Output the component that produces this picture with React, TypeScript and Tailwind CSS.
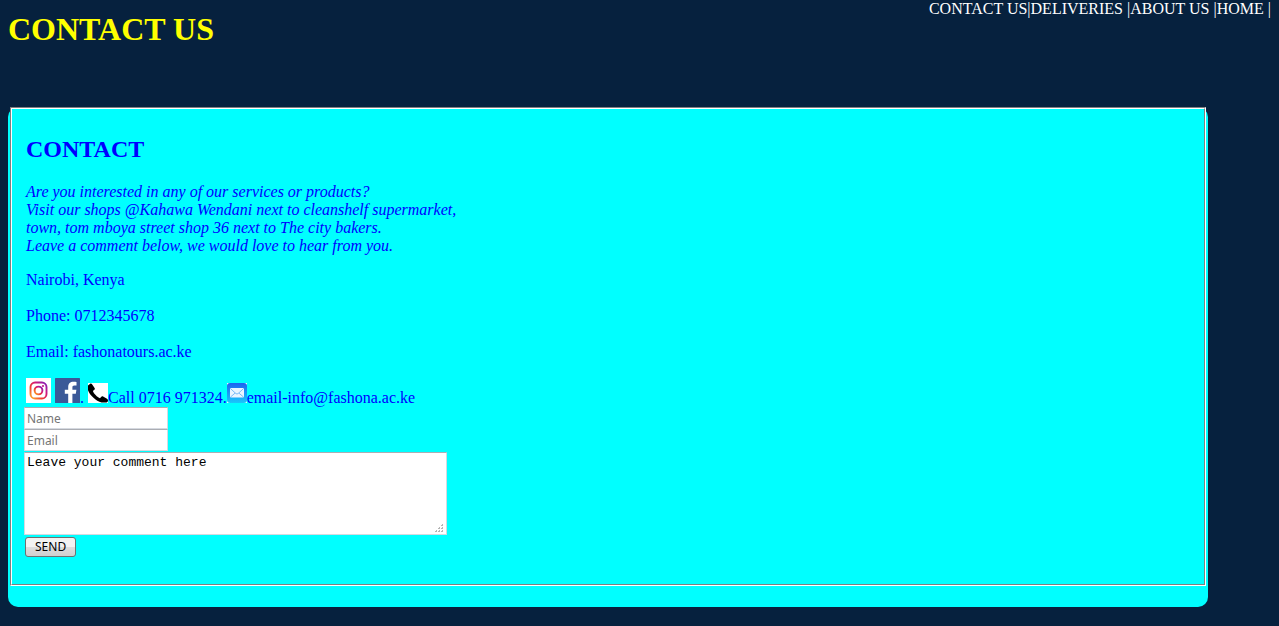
import type { ReactNode } from "react";

const links = ["CONTACT US|", "DELIVERIES |", "ABOUT US |", "HOME |"];

function InstagramIcon() {
  return (
    <svg className="inline-block h-[25px] w-[25px] align-baseline" viewBox="0 0 25 25" role="img" aria-label="Instagram">
      <defs>
        <linearGradient id="ig" x1="0" y1="1" x2="1" y2="0">
          <stop offset="0" stopColor="#fdb52a" />
          <stop offset="0.35" stopColor="#f1402f" />
          <stop offset="0.65" stopColor="#d2187a" />
          <stop offset="1" stopColor="#7d20c0" />
        </linearGradient>
      </defs>
      <rect width="25" height="25" fill="#fff" />
      <g fill="none" stroke="url(#ig)" strokeWidth="1.9">
        <rect x="4.5" y="4.5" width="16" height="16" rx="4.6" />
        <circle cx="12.5" cy="12.5" r="3.9" />
      </g>
      <circle cx="17" cy="8" r="1.1" fill="#c01c86" />
    </svg>
  );
}

function FacebookIcon() {
  return (
    <svg className="inline-block h-[25px] w-[25px] align-baseline" viewBox="0 0 25 25" role="img" aria-label="Facebook">
      <rect width="25" height="25" rx="0.6" fill="#3b5998" />
      <path
        d="M13.200 25v-9.300H9.800v-3.900h3.400V8.900c0-3.300 2.100-5.200 5.200-5.200 1.500 0 2.700.1 3.100.2v3.500h-2.100c-1.700 0-2 .8-2 2v2.400h4l-.6 3.900h-3.400V25z"
        fill="#fff"
      />
    </svg>
  );
}

function PhoneIcon() {
  return (
    <svg className="inline-block h-5 w-5 align-baseline" viewBox="0 0 20 20" role="img" aria-label="Phone">
      <rect width="20" height="20" fill="#fff" />
      <path
        d="M0 2.600L2.200.8C3 .4 3.700.7 4.200 1.500L6.600 5C7 5.700 6.900 6.300 6.300 6.800L4.900 8C5.300 10 9.500 14.600 12 15.200L13.300 13.700C13.800 13.100 14.400 13 15.100 13.400L19 15.800C19.700 16.300 20 16.800 20 17.500V18.200L18.600 19.600H13.600C8 17.800 1.500 12 0 7.200z"
        fill="#000"
      />
    </svg>
  );
}

function MailIcon() {
  return (
    <svg className="inline-block h-5 w-5 align-baseline" viewBox="0 0 20 20" role="img" aria-label="Mail">
      <defs>
        <linearGradient id="mail" x1="0" y1="0" x2="0" y2="1">
          <stop offset="0" stopColor="#1d62f0" />
          <stop offset="1" stopColor="#19c8fb" />
        </linearGradient>
      </defs>
      <rect width="20" height="20" fill="#fff" />
      <rect width="20" height="20" rx="3" fill="url(#mail)" />
      <rect x="3" y="5" width="14" height="9.500" rx="1.200" fill="#e9f4ff" />
      <path
        d="M3.500 5.600l5.300 4.900q1.200 1 2.400 0l5.300-4.900M3.500 14l4.700-4M16.500 14l-4.700-4"
        fill="none"
        stroke="#6fb4f5"
        strokeWidth="0.9"
      />
    </svg>
  );
}

function GripIcon() {
  return (
    <svg
      className="pointer-events-none absolute right-1 bottom-[3px] h-2 w-2"
      viewBox="0 0 8 8"
      fill="#b4b4b4"
      aria-hidden="true"
      shapeRendering="crispEdges"
    >
      <path d="M7 0h1v2H6V1h1zM4 3h1v2H3V4h1zM7 3h1v2H6V4h1zM1 6h1v2H0V7h1zM4 6h1v2H3V7h1zM7 6h1v2H6V7h1z" />
    </svg>
  );
}

function Groove({ children }: { children: ReactNode }) {
  return (
    <div className="mx-0.5 border border-t-[#808080] border-r-white border-b-white border-l-[#808080]">
      <div className="border border-t-white border-r-[#808080] border-b-[#808080] border-l-white">{children}</div>
    </div>
  );
}

const field =
  "block h-[22px] w-36 rounded-[1px] border border-[#d5d9e0] border-t-[#abadb3] bg-white px-0.5 font-['Noto_Sans',sans-serif] text-xs text-black outline-none placeholder:text-[#757575]";

export default function App() {
  return (
    <div className="min-h-screen bg-[#06213e] px-2 pb-[19px] font-['Liberation_Serif',serif] text-base leading-[18px]">
      <header className="flex items-start justify-between pb-[60px]">
        <h1 className="pt-[11px] text-[32px] leading-9 font-bold text-[#ffff00]">CONTACT US</h1>
        <nav className="flex text-white">
          {links.map((label) => (
            <a key={label} href="#">
              {label}
            </a>
          ))}
        </nav>
      </header>

      <main className="max-w-[1200px] rounded-[10px] bg-[#00ffff] pb-[21px] text-[#0000ff]">
        <Groove>
          <div className="px-3 pt-[26px] pb-[27px]">
            <section className="px-0.5">
              <h2 className="text-2xl leading-7 font-bold">CONTACT</h2>
              <p className="mt-5 italic">
                Are you interested in any of our services or products?
                <br />
                Visit our shops @Kahawa Wendani next to cleanshelf supermarket,
                <br />
                town, tom mboya street shop 36 next to The city bakers.
                <br />
                Leave a comment below, we would love to hear from you.
              </p>
              <p className="mt-4">Nairobi, Kenya</p>
              <p className="mt-[18px]">Phone: 0712345678</p>
              <p className="mt-[18px]">Email: fashonatours.ac.ke</p>
              <p className="mt-[17px]">
                <InstagramIcon /> <FacebookIcon />. <PhoneIcon />
                Call 0716 971324.
                <MailIcon />
                email-info@fashona.ac.ke
              </p>
            </section>
            <form onSubmit={(event) => event.preventDefault()}>
              <input className={field} type="text" aria-label="Name" placeholder="Name" />
              <input className={field} type="email" aria-label="Email" placeholder="Email" />
              <div className="relative mt-px w-[423px] max-w-full">
                <textarea
                  className="block h-[83px] w-full resize-none rounded-[1px] border border-[#d5d9e0] border-t-[#abadb3] bg-white px-0.5 py-0.5 font-['Liberation_Mono',monospace] text-[13px] leading-4 text-black outline-none"
                  aria-label="Comment"
                  defaultValue="Leave your comment here"
                />
                <GripIcon />
              </div>
              <button
                type="submit"
                className="mt-0.5 ml-px block h-5 rounded-[3px] border border-[#707070] bg-linear-to-b from-[#f2f2f2] from-50% via-[#dddddd] via-50% to-[#cfcfcf] px-[9px] font-['Noto_Sans',sans-serif] text-xs text-black"
              >
                SEND
              </button>
            </form>
          </div>
        </Groove>
      </main>
    </div>
  );
}
